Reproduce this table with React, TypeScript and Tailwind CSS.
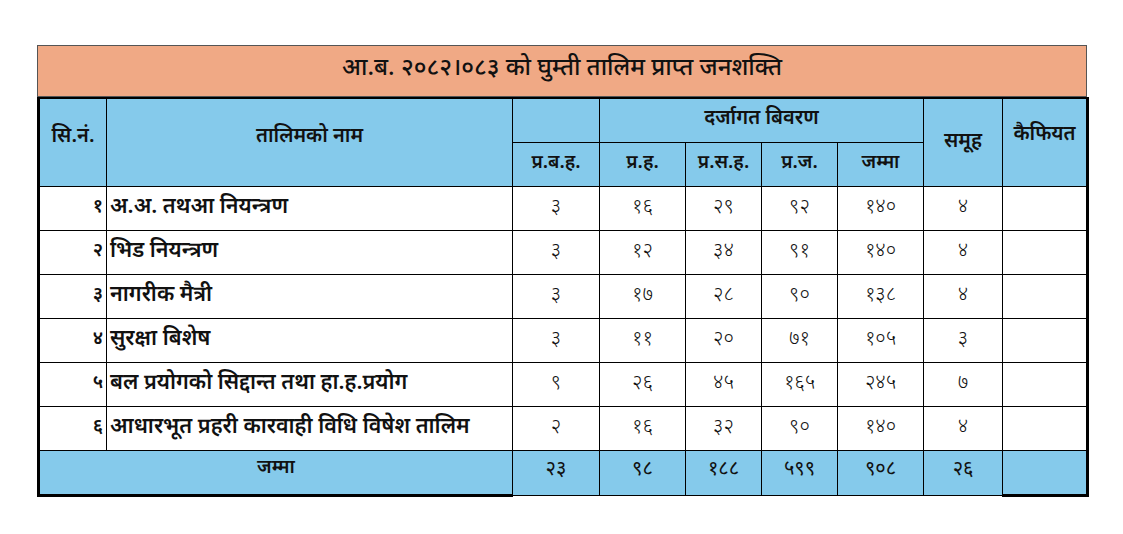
import React from "react";

const rows = [
  ["१", "अ.अ. तथआ नियन्त्रण", "३", "१६", "२९", "९२", "१४०", "४"],
  ["२", "भिड नियन्त्रण", "३", "१२", "३४", "९१", "१४०", "४"],
  ["३", "नागरीक मैत्री", "३", "१७", "२८", "९०", "१३८", "४"],
  ["४", "सुरक्षा बिशेष", "३", "११", "२०", "७१", "१०५", "३"],
  ["५", "बल प्रयोगको सिद्दान्त तथा हा.ह.प्रयोग", "९", "२६", "४५", "१६५", "२४५", "७"],
  ["६", "आधारभूत प्रहरी कारवाही विधि विषेश तालिम", "२", "१६", "३२", "९०", "१४०", "४"],
];

const totals = ["२३", "९८", "१८८", "५९९", "९०८", "२६"];

const font = {
  fontFamily: '"Noto Sans Devanagari", "Noto Serif Devanagari", "Lohit Devanagari", "Noto Sans", sans-serif',
};

export default function App() {
  return (
    <div className="w-[1123px] h-[534px] bg-white relative" style={font}>
      <div className="pt-[45px] pl-[37px]">
        <div className="w-[1050px] h-[52px] bg-[#f0a985] border border-[#555] flex items-center justify-center text-[24px] font-medium text-[#111] pb-[4px]">
          आ.ब. २०८२।०८३ को घुम्ती तालिम प्राप्त जनशक्ति
        </div>
        <table className="border-collapse table-fixed w-[1049px] text-[#111]">
          <colgroup>
            <col className="w-[68px]" />
            <col className="w-[406px]" />
            <col className="w-[87px]" />
            <col className="w-[86px]" />
            <col className="w-[76px]" />
            <col className="w-[76px]" />
            <col className="w-[86px]" />
            <col className="w-[79px]" />
            <col className="w-[85px]" />
          </colgroup>
          <thead>
            <tr className="h-[44px] bg-[#85caeb] text-[20px] font-semibold">
              <td rowSpan={2} className="border-t-2 border-l-[3px] border-r-[1.5px] border-b-[1.5px] border-black text-center align-middle pb-[10px]">सि.नं.</td>
              <td rowSpan={2} className="border-t-2 border-r-[1.5px] border-b-[1.5px] border-black text-center align-middle pb-[10px]">तालिमको नाम</td>
              <td className="border-t-2 border-r-[1.5px] border-b-[1.5px] border-black"></td>
              <td colSpan={4} className="border-t-2 border-r-[1.5px] border-b-[1.5px] border-black text-center align-middle pb-[2px]">दर्जागत बिवरण</td>
              <td rowSpan={2} className="border-t-2 border-r-[1.5px] border-b-[1.5px] border-black text-center align-middle">समूह</td>
              <td rowSpan={2} className="border-t-2 border-r-[3px] border-b-[1.5px] border-black text-center align-middle pb-[14px]">कैफियत</td>
            </tr>
            <tr className="h-[44px] bg-[#85caeb] text-[19px] font-semibold">
              {["प्र.ब.ह.", "प्र.ह.", "प्र.स.ह.", "प्र.ज.", "जम्मा"].map((h) => (
                <td key={h} className="border-r-[1.5px] border-b-[1.5px] border-black text-center align-middle">{h}</td>
              ))}
            </tr>
          </thead>
          <tbody>
            {rows.map((r) => (
              <tr key={r[0]} className="h-[44px] bg-white">
                <td className="border-l-[3px] border-r-[1.5px] border-b-[1.5px] border-black text-right pr-[3px] text-[19px] font-semibold align-middle">{r[0]}</td>
                <td className="border-r-[1.5px] border-b-[1.5px] border-black text-left pl-[3px] text-[21.5px] font-semibold align-middle whitespace-nowrap">{r[1]}</td>
                {r.slice(2).map((v, i) => (
                  <td key={i} className="border-r-[1.5px] border-b-[1.5px] border-black text-center text-[20px] font-light align-middle">{v}</td>
                ))}
                <td className="border-r-[3px] border-b-[1.5px] border-black"></td>
              </tr>
            ))}
            <tr className="h-[45px] bg-[#85caeb]">
              <td colSpan={2} className="border-l-[3px] border-r-[1.5px] border-b-[3px] border-black text-center text-[19px] font-semibold align-middle pb-[6px]">जम्मा</td>
              {totals.map((v, i) => (
                <td key={i} className="border-r-[1.5px] border-b-[1.5px] border-black text-center text-[20px] font-normal align-middle pb-[6px]">{v}</td>
              ))}
              <td className="border-r-[3px] border-b-[3px] border-black"></td>
            </tr>
          </tbody>
        </table>
      </div>
    </div>
  );
}
